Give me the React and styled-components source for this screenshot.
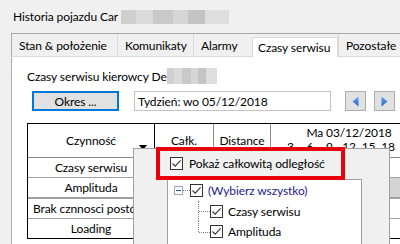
import React from "react";
import styled, { createGlobalStyle } from "styled-components";

const Global = createGlobalStyle`
  html, body { margin: 0; padding: 0; }
  body {
    background: #f0f0f0;
    font-family: "Lato", "Noto Sans", sans-serif;
    font-size: 12px;
    letter-spacing: -0.1px;
    color: #000;
  }
  * { box-sizing: border-box; }
`;

const Window = styled.div`
  position: relative;
  width: 400px;
  height: 244px;
  overflow: hidden;
  background: #f0f0f0;
  display: flex;
  flex-direction: column;
`;

const TitleBar = styled.div`
  height: 33px;
  flex: none;
  display: flex;
  align-items: center;
  padding-left: 13px;
  white-space: nowrap;
`;

const Blur = styled.span`
  display: inline-block;
  flex: none;
  width: ${(p) => p.$w}px;
  height: ${(p) => p.$h}px;
  margin-left: ${(p) => p.$ml || 0}px;
  background: linear-gradient(
    90deg,
    #cfcfcf 0 14%,
    #dadada 14% 30%,
    #c9c9c9 30% 48%,
    #d6d6d6 48% 62%,
    #c4c4c4 62% 78%,
    #dedede 78% 100%
  );
`;

const TabsArea = styled.div`
  flex: 1;
  margin-left: 11px;
  display: flex;
  flex-direction: column;
  min-height: 0;
`;

const TabStrip = styled.div`
  height: 24px;
  flex: none;
  display: flex;
  align-items: flex-end;
  border-top: 1px solid #a8a8a8;
`;

const Tab = styled.div`
  width: ${(p) => p.$w}px;
  flex: none;
  height: ${(p) => (p.$active ? 20 : 23)}px;
  display: flex;
  align-items: center;
  padding-left: ${(p) => (p.$active ? 5 : 7)}px;
  white-space: nowrap;
  overflow: hidden;
  background: ${(p) => (p.$active ? "#fff" : "#f0f0f0")};
  border-left: 1px solid #d9d9d9;
  border-top: ${(p) => (p.$active ? "1px solid #d9d9d9" : "none")};
  border-right: ${(p) => (p.$active ? "1px solid #d9d9d9" : "none")};
  border-bottom: ${(p) => (p.$active ? "none" : "1px solid #d9d9d9")};
  &:first-child { border-left: 1px solid #adadad; }
`;

const Panel = styled.div`
  flex: 1;
  background: #fff;
  border-left: 1px solid #adadad;
  padding-left: 15px;
  display: flex;
  flex-direction: column;
`;

const Heading = styled.div`
  margin-top: 11px;
  height: 16px;
  display: flex;
  align-items: center;
  white-space: nowrap;
`;

const Toolbar = styled.div`
  margin-top: 7px;
  margin-left: 5px;
  height: 20px;
  display: flex;
  align-items: stretch;
`;

const OkresButton = styled.div`
  width: 87px;
  background: #e1e1e1;
  border: 2px solid #0078d7;
  display: flex;
  align-items: center;
  justify-content: center;
`;

const DateInput = styled.div`
  width: 197px;
  margin-left: 15px;
  border: 1px solid #c4c4c4;
  background: #fff;
  display: flex;
  align-items: center;
  padding-left: 3px;
  white-space: nowrap;
`;

const NavButton = styled.div`
  width: 21px;
  margin-left: ${(p) => p.$ml}px;
  background: #e1e1e1;
  border: 1px solid #adadad;
  display: flex;
  align-items: center;
  justify-content: center;
`;

const Table = styled.div`
  margin-top: 12px;
  display: grid;
  grid-template-columns: 127px 59px 57px 200px;
  grid-template-rows: 34px 20px 21px 20px 20px;
  border-top: 1px solid #000;
  border-left: 1px solid #000;
  width: 480px;
`;

const HeadCell = styled.div`
  position: relative;
  border-right: 1px solid ${(p) => (p.$first ? "#000" : "#8a8a8a")};
  border-bottom: 1px solid #8a8a8a;
  display: flex;
  align-items: center;
  justify-content: center;
  white-space: nowrap;
`;

const SortArrow = styled.span`
  position: absolute;
  right: 7px;
  bottom: 7px;
  width: 0;
  height: 0;
  border-left: 4px solid transparent;
  border-right: 4px solid transparent;
  border-top: 5px solid #000;
`;

const DateHead = styled.div`
  border-bottom: 1px solid #8a8a8a;
  display: flex;
  flex-direction: column;
  padding-top: 2px;
`;

const DateLabel = styled.div`
  width: 156px;
  text-align: center;
  line-height: 14px;
`;

const Hours = styled.div`
  display: flex;
  padding-left: 9.75px;
  line-height: 14px;
`;

const Hour = styled.span`
  width: 19.5px;
  text-align: center;
`;

const Cell = styled.div`
  border-right: 1px solid ${(p) => (p.$first ? "#000" : "#c8c8c8")};
  border-bottom: ${(p) => (p.$thick ? "2px" : "1px")} solid
    ${(p) => (p.$last ? "#000" : "#a0a0a0")};
  display: flex;
  align-items: center;
  justify-content: ${(p) => (p.$left ? "flex-start" : "center")};
  padding-left: ${(p) => (p.$left ? 5 : 0)}px;
  white-space: nowrap;
  overflow: hidden;
  background: ${(p) => p.$bg || "#fff"};
`;

const Popup = styled.div`
  position: absolute;
  left: 133px;
  top: 148px;
  width: 257px;
  height: 110px;
  background: #f0f0f0;
  border: 1px solid #a0a0a0;
  display: flex;
  flex-direction: column;
`;

const OptionRow = styled.div`
  margin-top: -2px;
  margin-left: 22px;
  width: 189px;
  height: 33px;
  flex: none;
  border: 4px solid #e8000c;
  background: #f0f0f0;
  display: flex;
  align-items: center;
  padding-left: 10px;
  gap: 6px;
  white-space: nowrap;
  position: relative;
  z-index: 1;
`;

const TreeBox = styled.div`
  margin-top: -1px;
  margin-left: 33px;
  width: 195px;
  flex: 1;
  background: #fff;
  border: 1px solid #a0a0a0;
  display: flex;
  flex-direction: column;
`;

const TreeRow = styled.div`
  height: ${(p) => p.$h}px;
  flex: none;
  display: flex;
  align-items: center;
  padding-left: ${(p) => p.$indent}px;
  white-space: nowrap;
  color: ${(p) => p.$color || "#000"};
`;

const Expander = styled.span`
  width: 9px;
  height: 9px;
  flex: none;
  border: 1px solid #9aa6bd;
  display: flex;
  align-items: center;
  justify-content: center;
  &::after {
    content: "";
    width: 5px;
    height: 1px;
    background: #2c5ba8;
  }
`;

const HDots = styled.span`
  width: ${(p) => p.$w}px;
  flex: none;
  border-top: 1px dotted #808080;
`;

const Connector = styled.span`
  width: 12px;
  flex: none;
  align-self: ${(p) => (p.$last ? "flex-start" : "stretch")};
  height: ${(p) => (p.$last ? "50%" : "auto")};
  border-left: 1px dotted #808080;
  position: relative;
  &::after {
    content: "";
    position: absolute;
    left: 0;
    right: 0;
    top: ${(p) => (p.$last ? "100%" : "50%")};
    border-top: 1px dotted #808080;
  }
`;

const Box = styled.span`
  width: 13px;
  height: 13px;
  flex: none;
  border: 1px solid #333;
  background: #fff;
  display: flex;
  align-items: center;
  justify-content: center;
`;

const Label = styled.span`
  margin-left: ${(p) => p.$ml || 5}px;
`;

const Check = () => (
  <Box>
    <svg width="11" height="11" viewBox="0 0 11 11">
      <path d="M1.5 5.5 L4.2 8.2 L9.6 2.4" fill="none" stroke="#333" strokeWidth="1.1" />
    </svg>
  </Box>
);

const Arrow = ({ dir }) => (
  <svg width="7" height="11" viewBox="0 0 7 11">
    <defs>
      <linearGradient id={`g${dir}`} x1="0" y1="0" x2="0" y2="1">
        <stop offset="0" stopColor="#6aa7ee" />
        <stop offset="1" stopColor="#1e63c8" />
      </linearGradient>
    </defs>
    <path
      d={dir === "left" ? "M6.5 0.5 L0.5 5.5 L6.5 10.5 Z" : "M0.5 0.5 L6.5 5.5 L0.5 10.5 Z"}
      fill={`url(#g${dir})`}
    />
  </svg>
);

const tabs = [
  { label: "Stan & położenie", w: 106 },
  { label: "Komunikaty", w: 76 },
  { label: "Alarmy", w: 59 },
  { label: "Czasy serwisu", w: 86, active: true },
  { label: "Pozostałe", w: 62 },
];

const rows = [
  { name: "Czasy serwisu" },
  { name: "Amplituda", thick: true, bar: true },
  { name: "Brak cznnosci postój", left: true },
  { name: "Loading", last: true },
];

export default function App() {
  return (
    <>
      <Global />
      <Window>
        <TitleBar>
          Historia pojazdu Car <Blur $w={108} $h={14} $ml={3} />
        </TitleBar>
        <TabsArea>
          <TabStrip>
            {tabs.map((t) => (
              <Tab key={t.label} $w={t.w} $active={t.active}>
                {t.label}
              </Tab>
            ))}
          </TabStrip>
          <Panel>
            <Heading>
              Czasy serwisu kierowcy De
              <Blur $w={50} $h={16} />
            </Heading>
            <Toolbar>
              <OkresButton>Okres ...</OkresButton>
              <DateInput>Tydzień: wo 05/12/2018</DateInput>
              <NavButton $ml={14}>
                <Arrow dir="left" />
              </NavButton>
              <NavButton $ml={8}>
                <Arrow dir="right" />
              </NavButton>
            </Toolbar>
            <Table>
              <HeadCell $first>
                Czynność
                <SortArrow />
              </HeadCell>
              <HeadCell>Całk.</HeadCell>
              <HeadCell>Distance</HeadCell>
              <DateHead>
                <DateLabel>Ma 03/12/2018</DateLabel>
                <Hours>
                  {[3, 6, 9, 12, 15, 18].map((h) => (
                    <Hour key={h}>{h}</Hour>
                  ))}
                </Hours>
              </DateHead>
              {rows.map((r) => (
                <React.Fragment key={r.name}>
                  <Cell $first $left={r.left} $thick={r.thick} $last={r.last}>
                    {r.name}
                  </Cell>
                  <Cell $thick={r.thick} $last={r.last} />
                  <Cell $thick={r.thick} $last={r.last} />
                  <Cell $thick={r.thick} $last={r.last} $bg={r.bar ? "#d4d4d4" : undefined} />
                </React.Fragment>
              ))}
            </Table>
          </Panel>
        </TabsArea>
        <Popup>
          <OptionRow>
            <Check />
            <span>Pokaż całkowitą odległość</span>
          </OptionRow>
          <TreeBox>
            <TreeRow $h={21} $indent={6} $color="#1c1c8c">
              <Expander />
              <HDots $w={7} />
              <Check />
              <Label>(Wybierz wszystko)</Label>
            </TreeRow>
            <TreeRow $h={20} $indent={30}>
              <Connector />
              <Check />
              <Label>Czasy serwisu</Label>
            </TreeRow>
            <TreeRow $h={21} $indent={30}>
              <Connector $last />
              <Check />
              <Label>Amplituda</Label>
            </TreeRow>
          </TreeBox>
        </Popup>
      </Window>
    </>
  );
}
